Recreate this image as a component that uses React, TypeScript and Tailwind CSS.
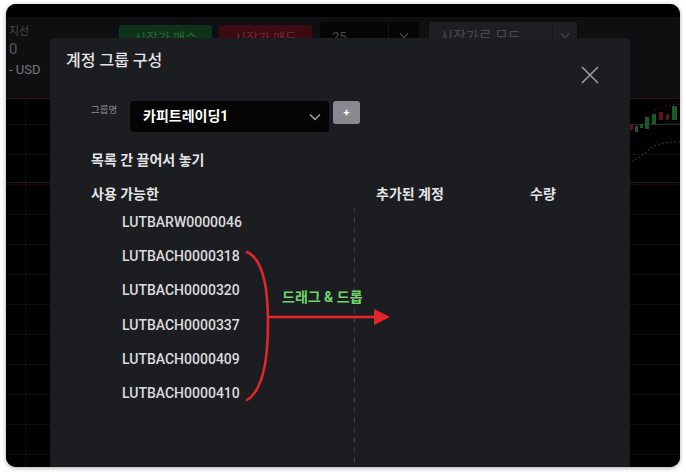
import React from "react";

const accounts = [
  "LUTBARW0000046",
  "LUTBACH0000318",
  "LUTBACH0000320",
  "LUTBACH0000337",
  "LUTBACH0000409",
  "LUTBACH0000410",
];

const font = "font-['Roboto','Noto_Sans_CJK_KR',sans-serif]";

const Chevron = ({ className }: { className?: string }) => (
  <svg viewBox="0 0 12 8" className={className} fill="none" stroke="currentColor" strokeWidth="1.4">
    <path d="M1 1.5 L6 6.5 L11 1.5" />
  </svg>
);

const Toolbar = () => (
  <div className="h-[81px] bg-[#0e0f11] flex">
    <div className="w-[113px] pl-[3px] pt-[8px] flex flex-col text-[#4b4b4d]">
      <span className="text-[11px] leading-[14px]">지선</span>
      <span className="text-[15px] leading-[20px] text-[#55565a]">0</span>
      <span className="text-[13px] leading-[18px] mt-[2px] text-[#77787c]">- USD</span>
    </div>
    <div className="flex gap-[7px] pt-[5px] items-start">
      <div className="mt-[3px] w-[93px] h-[26px] rounded-[3px] bg-[#0f3318] text-[#2b6434] text-[13px] flex items-center justify-center">
        시장가 매수
      </div>
      <div className="mt-[3px] w-[93px] h-[26px] rounded-[3px] bg-[#3a0c12] text-[#6e2a30] text-[13px] flex items-center justify-center">
        시장가 매도
      </div>
      <div className="ml-[1px] w-[99px] h-[30px] rounded-[3px] bg-[#050506] flex text-[#4a4a4d]">
        <span className="flex-1 pl-[12px] pt-[5px] text-[13px]">25</span>
        <span className="w-[31px] border-l border-[#151518] flex justify-center pt-[10px]">
          <Chevron className="w-[10px] h-[7px]" />
        </span>
      </div>
      <div className="ml-[3px] w-[148px] h-[30px] rounded-[3px] bg-[#1e1f22] flex text-[#48494c]">
        <span className="flex-1 pl-[11px] pt-[4px] text-[14px]">시장가로 모드</span>
        <span className="w-[25px] border-l border-[#141517] flex justify-center pt-[10px]">
          <Chevron className="w-[10px] h-[7px]" />
        </span>
      </div>
    </div>
  </div>
);

const Chart = () => (
  <div className="flex-1 relative bg-black bg-[linear-gradient(#0f0f11_1px,transparent_1px),linear-gradient(90deg,#0f0f11_1px,transparent_1px)] bg-[size:60px_30px] bg-[position:19px_26px]">
    <div className="h-px bg-[#3a1216]" />
    <div className="mt-[83px] h-px bg-[#3a1216]" />
    <svg className="absolute right-0 top-[4px] w-[56px] h-[70px]" viewBox="0 0 56 70">
      <path d="M30 8 Q40 3 56 2" stroke="#5a1a20" strokeWidth="1.2" strokeDasharray="1.5 2.5" fill="none" />
      <path d="M0 62 Q14 58 22 50 Q30 40 56 40" stroke="#1f4a24" strokeWidth="1.2" strokeDasharray="1.5 2.5" fill="none" />
      <path d="M0 23 L56 22" stroke="#2a3236" strokeWidth="1" />
      <rect x="0" y="16" width="3" height="18" fill="#5a1418" />
      <rect x="6" y="22" width="3" height="6" fill="#5a1418" />
      <rect x="11" y="24" width="3" height="6" fill="#1a5a24" />
      <rect x="16" y="22" width="3" height="4" fill="#1a5a24" />
      <rect x="21" y="15" width="4" height="12" fill="#1a5a24" />
      <rect x="28" y="12" width="4" height="10" fill="#1a5a24" />
      <rect x="35" y="10" width="4" height="8" fill="#5a1418" />
      <rect x="42" y="12" width="3" height="6" fill="#5a1418" />
      <rect x="48" y="4" width="5" height="14" fill="#1a5a24" />
    </svg>
  </div>
);

const GroupDialog = () => (
  <div className="absolute left-[44px] top-[34px] w-[580px] h-[450px] rounded-[5px] bg-[#1c1d21] text-[#e4e4e6]">
    <div className="h-[50px] flex justify-between items-start">
      <h2 className="pl-[16px] pt-[11px] text-[16px] leading-[24px] font-medium">계정 그룹 구성</h2>
      <svg viewBox="0 0 18 18" className="mt-[28px] mr-[31px] w-[18px] h-[18px] text-[#9d9ea2]" stroke="currentColor" strokeWidth="1.6">
        <path d="M1 1 L17 17 M17 1 L1 17" />
      </svg>
    </div>

    <div className="pl-[41px]">
      <div className="mt-[13px] flex items-start">
        <span className="w-[39px] mt-[2px] text-[9.5px] leading-[13px] text-[#8c8d91]">그룹명</span>
        <div className="w-[199px] h-[31px] rounded-[4px] bg-[#050506] flex items-center justify-between pl-[13px] pr-[8px]">
          <span className="text-[14px] font-bold text-white">카피트레이딩1</span>
          <Chevron className="w-[12px] h-[8px] text-[#a5a6aa]" />
        </div>
        <div className="ml-[4px] w-[27px] h-[23px] rounded-[3px] bg-[#878a91] flex items-center justify-center text-white text-[11px] font-bold leading-none">
          +
        </div>
      </div>

      <p className="mt-[18px] text-[14px] leading-[20px] font-bold">목록 간 끌어서 놓기</p>

      <div className="mt-[14px] flex text-[14px] leading-[20px] font-bold">
        <span className="w-[285px]">사용 가능한</span>
        <span className="w-[154px]">추가된 계정</span>
        <span>수량</span>
      </div>

      <div className="mt-[3px] flex h-[300px]">
        <ul className="w-[263px] pl-[31px] pt-[5px] flex flex-col gap-[14.2px]">
          {accounts.map((a) => (
            <li key={a} className="text-[14px] leading-[20px] font-medium text-[#dcdcde]">
              {a}
            </li>
          ))}
        </ul>
        <div className="w-px bg-[linear-gradient(#3b3c41_60%,transparent_0)] bg-[size:1px_10px]" />
        <div className="flex-1" />
      </div>
    </div>

    <svg className="absolute left-[190px] top-[205px] w-[160px] h-[170px]" viewBox="0 0 160 170" fill="none">
      <path d="M7 9 C21 15 28 40 28 80 C28 122 22 148 7 157" stroke="#e3262a" strokeWidth="2.6" strokeLinecap="round" />
      <path d="M28 74 L137 74" stroke="#e3262a" strokeWidth="2.6" />
      <polygon points="134,66 150,74 134,82" fill="#e3262a" />
    </svg>
    <span className="absolute left-[232px] top-[249px] text-[14px] leading-[20px] font-bold text-[#6fd46b]">
      드래그 &amp; 드롭
    </span>
  </div>
);

export default function App() {
  return (
    <div className={`h-[472px] bg-white pt-[4px] pl-[6px] ${font}`}>
      <div className="relative w-[674px] h-[463px] rounded-[10px] overflow-hidden bg-black flex flex-col shadow-[0_1px_4px_rgba(0,0,0,0.35)]">
        <div className="h-[13px] bg-black" />
        <Toolbar />
        <Chart />
        <GroupDialog />
      </div>
    </div>
  );
}
